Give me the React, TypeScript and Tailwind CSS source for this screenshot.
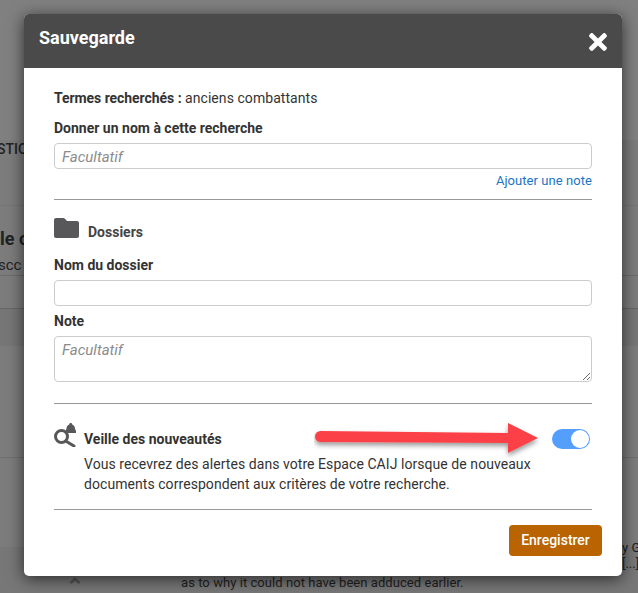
import { FaTimes } from 'react-icons/fa';

const font = { fontFamily: 'Roboto, "Liberation Sans", sans-serif' };

// page behind the dialog, dimmed by the overlay
function Backdrop() {
  return (
    <div className="absolute inset-0 flex flex-col bg-[#7c7c7c] text-[#222]">
      <div className="h-[140px] shrink-0 bg-[#808080]" />
      <div className="h-[66px] shrink-0 border-b border-[#757575] text-[14px] leading-[18px] font-medium whitespace-nowrap">
        <span className="-ml-[3px]">STION</span>
      </div>
      <div className="h-[36px] shrink-0 pt-[23px] text-[18px] leading-[20px] font-bold whitespace-nowrap">le c</div>
      <div className="h-[34px] shrink-0 border-b border-[#6b6b6b] pt-[13px] text-[15px] leading-[20px] whitespace-nowrap">
        <span className="-ml-[2px]">scc</span>
      </div>
      <div className="h-[33px] shrink-0 border-b border-[#666666]" />
      <div className="h-[37px] shrink-0 bg-[#767676]" />
      <div className="h-[112px] shrink-0 border-b border-[#6f6f6f]" />
      <div className="h-[89px] shrink-0" />
      <div className="flex-1 bg-[#777777]" />
    </div>
  );
}

function Divider() {
  return <hr className="h-px border-0 bg-[#999999]" />;
}

function FolderIcon() {
  return (
    <svg width="25" height="20" viewBox="0 0 25 20" className="block">
      <path
        d="M2 0h7c1 0 1.600.4 2.200 1l1.800 2H23c1 0 2 .9 2 2v13c0 1.100-1 2-2 2H2c-1 0-2-.9-2-2V2C0 .9 1 0 2 0z"
        fill="#58585a"
      />
    </svg>
  );
}

function AlertSearchIcon() {
  return (
    <svg width="22" height="24" viewBox="0 0 22 24" className="block shrink-0">
      <circle cx="7.500" cy="13.500" r="6" fill="none" stroke="#58585a" strokeWidth="3" />
      <path d="M12.500 18.500l7.500 4.500" stroke="#58585a" strokeWidth="3" strokeLinecap="round" />
      <path
        d="M16.700 0c1 0 1.500.7 1.500 1.500 1.900.7 2.600 2.200 2.800 3.800.1 1.200.5 2 1 2.700v2H11.400V8c.6-.7 1-1.500 1.100-2.700.2-1.600.8-3.100 2.700-3.800 0-.8.500-1.500 1.500-1.500z"
        fill="#58585a"
      />
    </svg>
  );
}

function RedArrow() {
  return (
    <svg width="228" height="44" viewBox="0 0 228 44" className="block">
      <defs>
        <filter id="arrow-shadow" x="-5%" y="-30%" width="110%" height="170%">
          <feDropShadow dx="0" dy="3" stdDeviation="2.500" floodColor="#000" floodOpacity="0.4" />
        </filter>
      </defs>
      <path
        d="M6.500 11 L194 13 L194 3 L224 18 L194 33 L194 23 L6.500 22 A5.500 5.500 0 0 1 6.500 11 Z"
        fill="#fb4146"
        filter="url(#arrow-shadow)"
      />
    </svg>
  );
}

export default function App() {
  return (
    <div className="relative h-[593px] w-[638px] overflow-hidden" style={font}>
      <Backdrop />

      {/* bits of page text showing round the dialog */}
      <span className="absolute left-[181px] top-[575px] text-[13px] leading-[16px] tracking-[0.06px] whitespace-nowrap text-[#1f1f1f]">
        as to why it could not have been adduced earlier.
      </span>
      <span className="absolute left-[622px] top-[540px] text-[13px] leading-[16px] whitespace-nowrap text-[#1f1f1f]">
        y G
      </span>
      <span className="absolute left-[622px] top-[556px] text-[13px] leading-[16px] whitespace-nowrap text-[#1f1f1f]">
        [...]
      </span>
      <svg width="12" height="7" viewBox="0 0 12 7" className="absolute left-[69px] top-[577px]">
        <path d="M1.500 6L6 2l4.500 4" fill="none" stroke="#555" strokeWidth="2.500" />
      </svg>

      {/* dialog */}
      <div className="absolute left-[24px] top-[14px] flex h-[562px] w-[598px] flex-col overflow-hidden rounded-[5px] bg-white shadow-[0_3px_16px_rgba(0,0,0,0.65)]">
        <header className="flex h-[54px] shrink-0 justify-between bg-[#4a4a4a] pl-[15px] pr-[11px] text-white">
          <h1 className="pt-[12px] text-[18px] leading-[24px] font-bold">Sauvegarde</h1>
          <FaTimes size={26} className="mt-[15px]" />
        </header>

        <div className="flex flex-1 flex-col px-[30px] pt-[21px] text-[14px] text-[#333]">
          <p className="leading-[18px] tracking-[0.06px]">
            <strong className="font-bold tracking-[-0.06px]">Termes recherchés :</strong> anciens combattants
          </p>

          <label className="mt-[12px] block leading-[18px] font-bold">Donner un nom à cette recherche</label>
          <input
            placeholder="Facultatif"
            className="mt-[6px] h-[26px] w-full rounded-[4px] border border-[#cccccc] px-[7px] pt-[2px] text-[15px] italic outline-none placeholder:text-[#8b8b8b]"
          />
          <a className="mt-[4px] self-end text-[13px] leading-[16px] tracking-[0.06px] text-[#1a75c4]">Ajouter une note</a>
          <div className="mt-[10px]">
            <Divider />
          </div>

          <div className="mt-[18px] flex items-end gap-[9px]">
            <FolderIcon />
            <span className="-mb-[3px] leading-[18px] font-bold text-[#444]">Dossiers</span>
          </div>

          <label className="mt-[18px] block leading-[18px] font-bold">Nom du dossier</label>
          <input className="mt-[6px] h-[26px] w-full rounded-[4px] border border-[#cccccc] outline-none" />

          <label className="mt-[6px] block leading-[18px] font-bold">Note</label>
          <textarea
            placeholder="Facultatif"
            className="mt-[6px] h-[46px] w-full rounded-[4px] border border-[#cccccc] px-[7px] py-[2px] text-[15px] italic outline-none placeholder:text-[#8b8b8b]"
          />

          <div className="mt-[21px]">
            <Divider />
          </div>

          <div className="relative mt-[19px] flex items-start">
            <AlertSearchIcon />
            <div className="ml-[8px] flex-1 pt-[6px]">
              <div className="flex items-center justify-between pr-[2px]">
                <span className="leading-[18px] font-bold">Veille des nouveautés</span>
                <span className="flex h-[20px] w-[38px] items-center justify-end rounded-full bg-[#559ffc] pr-[1px]">
                  <span className="h-[18px] w-[18px] rounded-full bg-white" />
                </span>
              </div>
              <p className="mt-[5px] leading-[20px] tracking-[0.06px]">
                Vous recevrez des alertes dans votre Espace CAIJ lorsque de nouveaux
                <br />
                documents correspondent aux critères de votre recherche.
              </p>
            </div>
            <div className="absolute left-[260px] top-[-3px]">
              <RedArrow />
            </div>
          </div>

          <div className="mt-[15px]">
            <Divider />
          </div>

          <div className="-mr-[10px] mt-[15px] flex justify-end">
            <button className="h-[31px] w-[93px] rounded-[4px] bg-[#b96400] text-[14px] font-medium text-white">
              Enregistrer
            </button>
          </div>
        </div>
      </div>
    </div>
  );
}
